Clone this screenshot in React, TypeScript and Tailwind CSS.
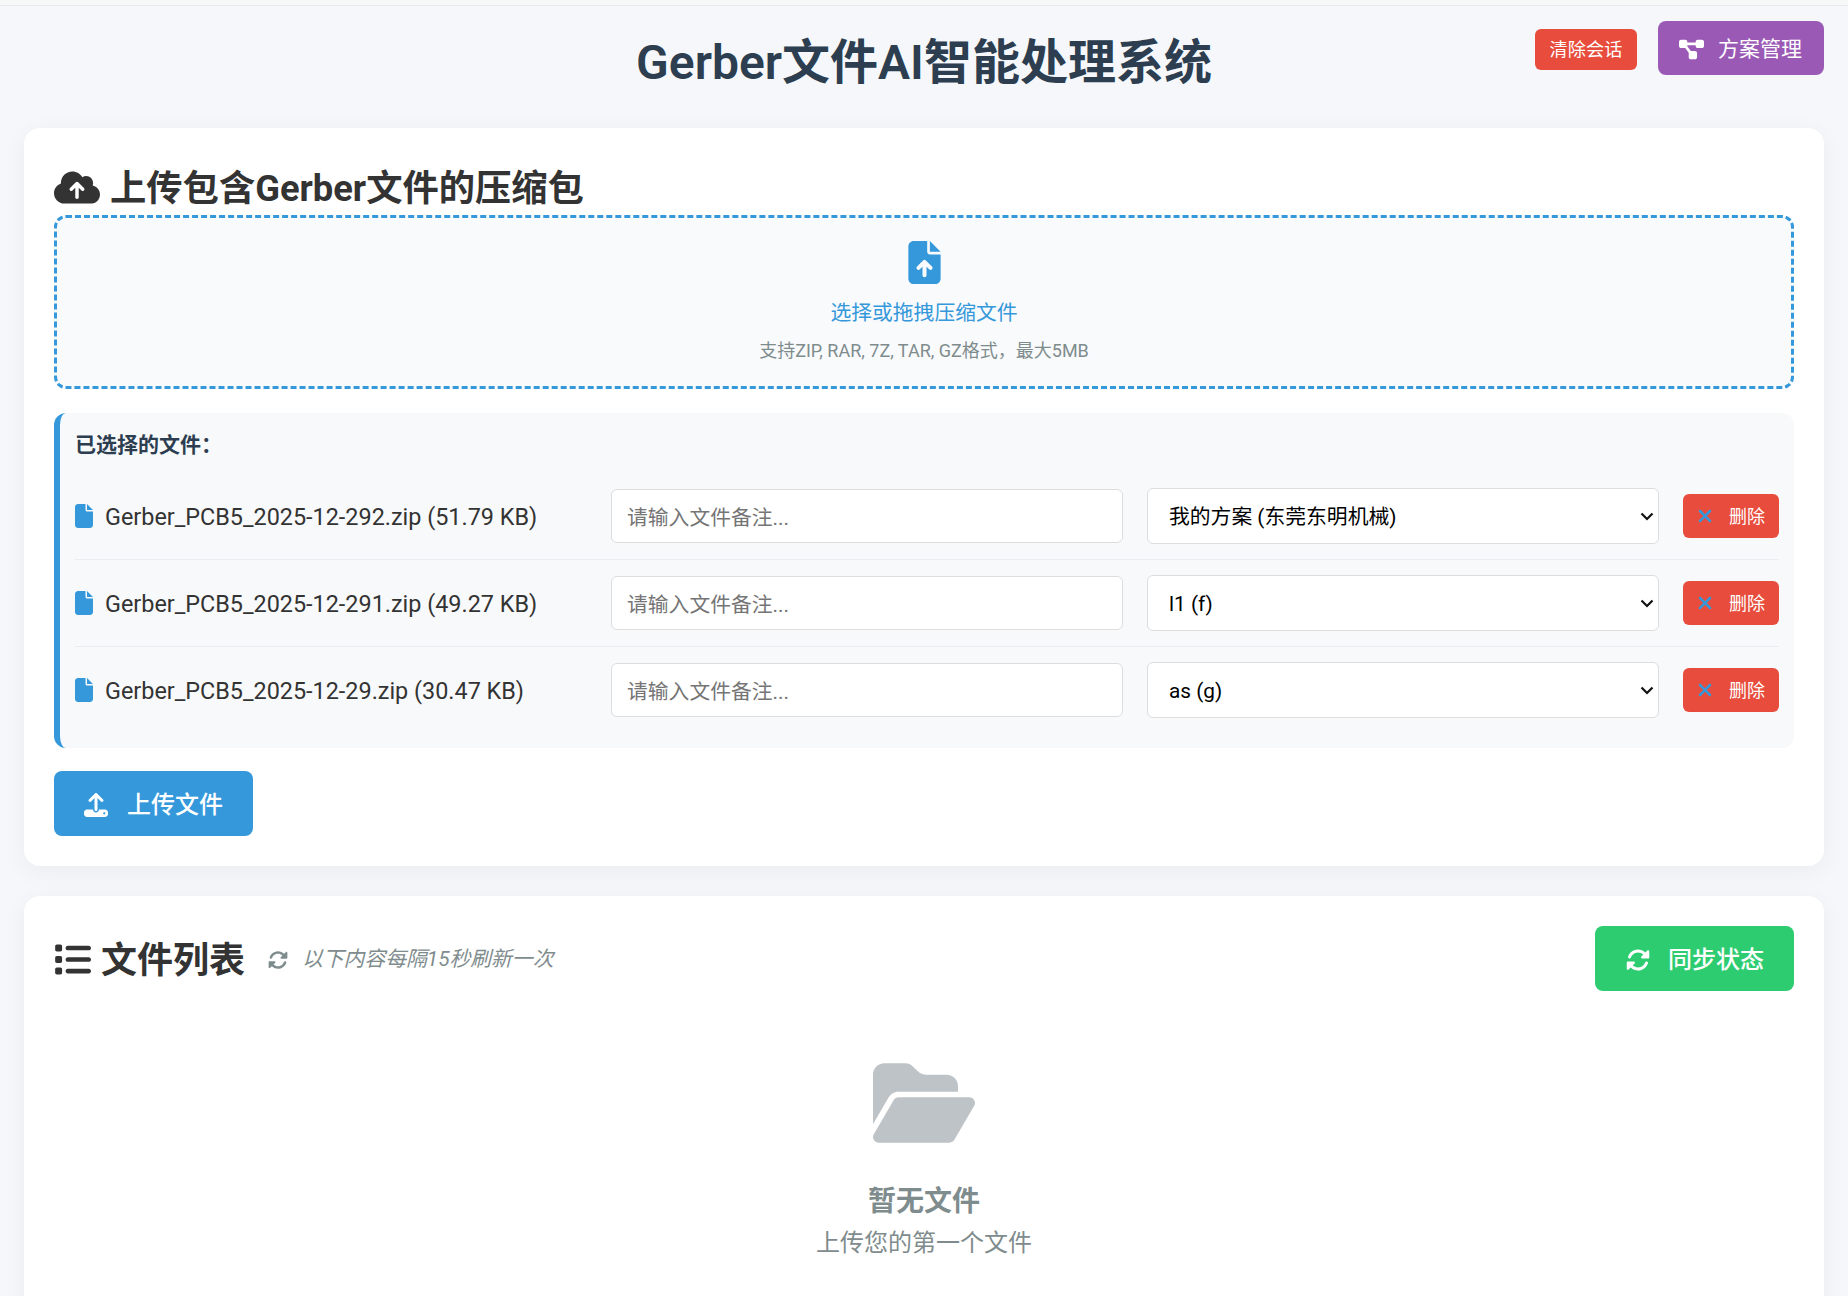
import {
  FaCloudArrowUp,
  FaDiagramProject,
  FaFile,
  FaFileArrowUp,
  FaFolderOpen,
  FaList,
  FaRotate,
  FaUpload,
  FaXmark,
} from "react-icons/fa6";

const files = [
  { name: "Gerber_PCB5_2025-12-292.zip (51.79 KB)", plan: "我的方案 (东莞东明机械)" },
  { name: "Gerber_PCB5_2025-12-291.zip (49.27 KB)", plan: "l1 (f)" },
  { name: "Gerber_PCB5_2025-12-29.zip (30.47 KB)", plan: "as (g)" },
];

function FileRow({ file, last }: { file: (typeof files)[number]; last: boolean }) {
  return (
    <div className={`grid grid-cols-[1fr_1fr_1fr_96px] items-center gap-6 ${last ? "h-[86px]" : "h-[87px] border-b border-[#ecedf0]"}`}>
      <div className="min-w-0 flex items-center text-[23.4px] text-[#333333] whitespace-nowrap">
        <FaFile className="text-[#3498db] text-[24px] w-[18px] shrink-0 mr-3" />
        <span className="pt-[3px]">{file.name}</span>
      </div>
      <input
        placeholder="请输入文件备注..."
        className="w-full h-[54px] px-[15px] pt-[3px] text-[20.8px] bg-white border border-[#dddddd] rounded-md outline-none placeholder:text-[#757575]"
      />
      <div className="relative">
        <select
          defaultValue={file.plan}
          className="w-full h-[56px] px-[21px] pt-[3px] text-[20.8px] text-black bg-white border border-[#dddddd] rounded-md outline-none appearance-none"
        >
          <option>{file.plan}</option>
        </select>
        <svg viewBox="0 0 14 9" className="absolute right-[5px] top-[24px] w-[14px] h-[9px] pointer-events-none">
          <path d="M1.5 1.5 7 7l5.5-5.5" fill="none" stroke="#111111" strokeWidth="2.2" />
        </svg>
      </div>
      <button className="h-[44px] pr-[2px] flex items-center justify-center gap-[14px] bg-[#e74c3c] rounded-md text-white text-[18px]">
        <FaXmark className="text-[#3498db] text-[20px]" />
        删除
      </button>
    </div>
  );
}

export default function App() {
  return (
    <div className="h-screen overflow-hidden bg-[#f5f7fa] text-[#333333] font-['Roboto','Noto_Sans_CJK_SC',sans-serif]">
      <div className="h-[6px] bg-[#f7f7f7] border-b border-[#e8eaf0]" />
      <div className="px-6">
        <header className="h-[122px] grid grid-cols-[1fr_auto_1fr]">
          <div />
          <h1 className="text-[48px] leading-[114px] font-semibold text-[#2c3e50]">Gerber文件AI智能处理系统</h1>
          <div className="flex justify-end items-start gap-[21px] pt-[15px]">
            <button className="mt-2 w-[102px] h-[41px] bg-[#e74c3c] rounded-md text-white text-[18.2px]">清除会话</button>
            <button className="w-[166px] h-[54px] pt-[3px] flex items-center justify-center gap-[13px] bg-[#9b59b6] rounded-lg text-white text-[21px]">
              <FaDiagramProject className="text-[25px] -translate-x-[1px]" />
              方案管理
            </button>
          </div>
        </header>

        <section className="bg-white rounded-2xl p-[30px] shadow-[0_5px_24px_rgba(0,0,0,0.05)]">
          <h2 className="h-[57px] pt-[5px] flex items-center gap-[10px] text-[36.3px] font-bold text-[#333333]">
            <FaCloudArrowUp className="text-[37px] w-[46px] -translate-y-[2px]" />
            上传包含Gerber文件的压缩包
          </h2>
          <div className="h-[174px] pt-[23px] flex flex-col items-center border-[3px] border-dashed border-[#3498db] rounded-xl bg-[#f9fafc]">
            <FaFileArrowUp className="text-[43px] text-[#3498db]" />
            <p className="mt-[14px] text-[20.8px] text-[#3498db]">选择或拖拽压缩文件</p>
            <p className="mt-[8px] text-[18px] text-[#7f8c8d]">支持ZIP, RAR, 7Z, TAR, GZ格式，最大5MB</p>
          </div>

          <div className="mt-6 px-[15px] py-[15px] bg-[#f8f9fa] border-l-[6px] border-[#3498db] rounded-xl">
            <h3 className="h-[45px] pt-[2px] text-[21px] font-bold text-[#2c3e50]">已选择的文件：</h3>
            {files.map((file, i) => (
              <FileRow key={file.name} file={file} last={i === files.length - 1} />
            ))}
          </div>

          <button className="mt-[23px] w-[199px] h-[65px] pt-[2px] flex items-center justify-center gap-[19px] bg-[#3498db] rounded-lg text-white text-[24px] font-medium">
            <FaUpload className="text-[24px]" />
            上传文件
          </button>
        </section>

        <section className="mt-[30px] bg-white rounded-2xl p-[30px] shadow-[0_5px_24px_rgba(0,0,0,0.05)]">
          <div className="flex items-center justify-between h-[65px]">
            <div className="flex items-center">
              <h2 className="pt-[4px] flex items-center gap-[10px] text-[36px] font-bold text-[#333333]">
                <FaList className="text-[37px] -translate-y-[1px]" />
                文件列表
              </h2>
              <FaRotate className="mt-[2px] ml-[23px] text-[20px] text-[#7f8c8d]" />
              <span className="ml-[14px] pt-[3px] text-[20.8px] italic text-[#7f8c8d]">以下内容每隔15秒刷新一次</span>
            </div>
            <button className="w-[199px] h-[65px] pt-[3px] flex items-center justify-center gap-[19px] bg-[#2ecc71] rounded-lg text-white text-[24px] font-medium">
              <FaRotate className="text-[24px] translate-x-[1px]" />
              同步状态
            </button>
          </div>
          <div className="pt-[61px] pb-[60px] flex flex-col items-center">
            <FaFolderOpen className="text-[102px] text-[#bdc3c7]" />
            <p className="mt-[27px] text-[28px] font-bold text-[#7f8c8d]">暂无文件</p>
            <p className="mt-[2px] text-[24px] text-[#7f8c8d]">上传您的第一个文件</p>
          </div>
        </section>
      </div>
    </div>
  );
}
